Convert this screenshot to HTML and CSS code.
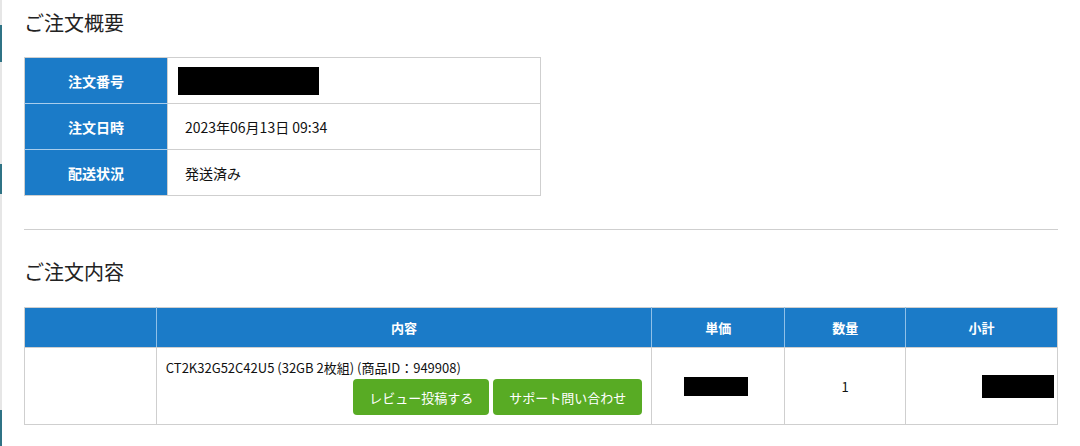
FILE: index.html
```html
<!DOCTYPE html>
<html lang="ja">
<head>
<meta charset="utf-8">
<link rel="stylesheet" href="styles.css">
</head>
<body>
<div class="edge">
  <span class="edge-mark m1"></span>
  <span class="edge-mark m2"></span>
  <span class="edge-mark m3"></span>
</div>
<main class="page">
  <h2 class="title t1">ご注文概要</h2>
  <table class="summary">
    <tr><th>注文番号</th><td><span class="redact r-order"></span></td></tr>
    <tr><th>注文日時</th><td>2023年06月13日 09:34</td></tr>
    <tr><th>配送状況</th><td>発送済み</td></tr>
  </table>
  <hr class="sep">
  <h2 class="title t2">ご注文内容</h2>
  <table class="items">
    <thead>
      <tr>
        <th class="c-img"></th>
        <th class="c-desc">内容</th>
        <th class="c-price">単価</th>
        <th class="c-qty">数量</th>
        <th class="c-sub">小計</th>
      </tr>
    </thead>
    <tbody>
      <tr>
        <td></td>
        <td class="desc">
          <div class="name">CT2K32G52C42U5 (32GB 2枚組) (商品ID：949908)</div>
          <div class="btns">
            <a class="btn">レビュー投稿する</a>
            <a class="btn">サポート問い合わせ</a>
          </div>
        </td>
        <td class="center"><span class="redact r-price"></span></td>
        <td class="center">1</td>
        <td class="right"><span class="redact r-sub"></span></td>
      </tr>
    </tbody>
  </table>
</main>
</body>
</html>
```

FILE: styles.css
```css
* { box-sizing: border-box; }
html, body { margin: 0; padding: 0; background: #fff; }
body {
  font-family: "Noto Sans CJK JP", "Noto Sans", sans-serif;
  color: #222;
  width: 1080px;
  height: 446px;
  overflow: hidden;
  position: relative;
}
.edge {
  position: absolute;
  left: 0; top: 0;
  width: 2px; height: 446px;
  background: #e6e6e6;
}
.edge-mark {
  position: absolute;
  left: 0; width: 2px;
  background: #2f7385;
}
.m1 { top: 25px; height: 37px; }
.m2 { top: 164px; height: 30px; }
.m3 { top: 410px; height: 36px; }

.page { padding: 8px 22px 0 24px; }
.title {
  margin: 0;
  font-size: 20px;
  font-weight: normal;
  line-height: 30px;
  color: #222;
}
.t1 { margin-bottom: 19px; }

table { border-collapse: collapse; }
.summary {
  width: 517px;
  font-size: 14px;
}
.summary th {
  width: 143px;
  height: 46px;
  background: #1b7bc8;
  color: #fff;
  font-weight: bold;
  text-align: center;
  border: 1px solid #cfcfcf;
  border-top-color: #a9cdec;
  border-bottom-color: #a9cdec;
  padding: 0;
}
.summary tr:first-child th { border-top-color: #cfcfcf; }
.summary tr:last-child th { border-bottom-color: #cfcfcf; }
.summary td {
  border: 1px solid #cfcfcf;
  padding: 0 17px;
  height: 46px;
  color: #111;
}
.redact { display: inline-block; background: #000; vertical-align: middle; }
.r-order { width: 141px; height: 28px; margin-left: -7px; }
.r-price { width: 64px; height: 19px; margin-right: 4px; }
.r-sub { width: 72px; height: 23px; }

.sep {
  border: 0;
  border-top: 1px solid #cfcfcf;
  margin: 33px 0 27px;
  height: 0;
}
.t2 { margin-bottom: 20px; }

.items {
  width: 1034px;
  font-size: 13px;
}
.items th {
  height: 40px;
  background: #1b7bc8;
  color: #fff;
  font-weight: bold;
  text-align: center;
  border: 1px solid #cfcfcf;
  border-left-color: #8fc0e8;
  border-right-color: #8fc0e8;
  padding: 0;
}
.items th:first-child { border-left-color: #cfcfcf; }
.items th:last-child { border-right-color: #cfcfcf; }
.c-img { width: 132px; }
.c-desc { width: 496px; }
.c-price { width: 133px; }
.c-qty { width: 121px; }
.c-sub { width: 152px; }
.items td {
  border: 1px solid #cfcfcf;
  height: 77px;
  vertical-align: middle;
  color: #111;
  padding: 0;
}
.items td.desc {
  padding: 10px 9px 9px 9px;
  vertical-align: top;
}
.name { line-height: 20px; height: 20px; }
.btns {
  display: flex;
  justify-content: flex-end;
  gap: 4px;
  margin-top: 1px;
}
.btn {
  display: inline-flex;
  align-items: center;
  justify-content: center;
  height: 36px;
  padding: 0 16px;
  background: #58ab24;
  color: #fff;
  border-radius: 4px;
  font-size: 13px;
  text-decoration: none;
}
.center { text-align: center; }
.right { text-align: right; padding-right: 3px !important; }
```
